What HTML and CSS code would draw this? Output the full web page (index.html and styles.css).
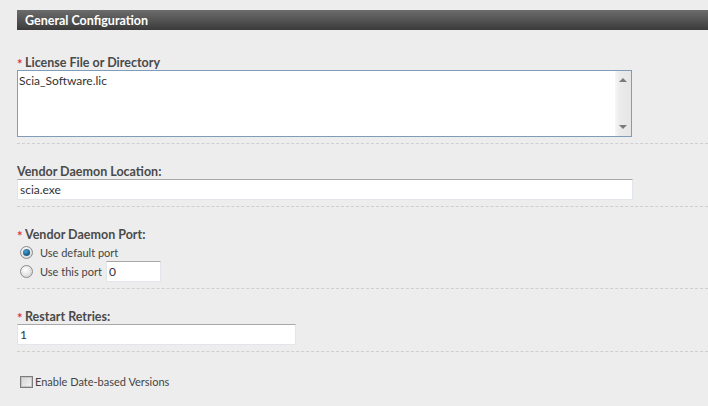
FILE: index.html
```html
<!DOCTYPE html>
<html>
<head>
<meta charset="utf-8">
<link rel="stylesheet" href="styles.css">
</head>
<body>
<div class="page">
  <div class="header">General Configuration</div>

  <div class="field first">
    <div class="label"><span class="req">*</span>License File or Directory</div>
    <div class="textarea">
      <div class="ta-text">Scia_Software.lic</div>
      <div class="scrollbar">
        <span class="arrow up"></span>
        <span class="arrow down"></span>
      </div>
    </div>
  </div>

  <div class="field">
    <div class="label">Vendor Daemon Location:</div>
    <div class="input wide">scia.exe</div>
  </div>

  <div class="field">
    <div class="label"><span class="req">*</span>Vendor Daemon Port:</div>
    <div class="radio-row"><span class="radio checked"></span><span class="opt">Use default port</span></div>
    <div class="radio-row"><span class="radio"></span><span class="opt">Use this port</span><div class="input port">0</div></div>
  </div>

  <div class="field">
    <div class="label"><span class="req">*</span>Restart Retries:</div>
    <div class="input medium">1</div>
  </div>

  <div class="check-row"><span class="checkbox"></span><span class="opt">Enable Date-based Versions</span></div>
</div>
</body>
</html>
```
FILE: styles.css
```css
html, body {
  margin: 0;
  padding: 0;
  background: #ededed;
}
body {
  font-family: Lato, "Open Sans", sans-serif;
  font-size: 12px;
  color: #333;
}
.page {
  padding: 10px 0 0 17px;
}
.header {
  height: 20px;
  line-height: 22px;
  background: linear-gradient(#6c6c6c, #3b3b3b);
  color: #fff;
  font-weight: bold;
  font-size: 12.5px;
  padding-left: 8px;
}
.field {
  border-bottom: 1px dashed #cfcfcf;
  padding: 20px 0 6px 0;
}
.field.first {
  padding-top: 25px;
}
.label {
  font-weight: bold;
  font-size: 12.5px;
  color: #4a4a4a;
  line-height: 15px;
  height: 15px;
  display: flex;
  align-items: center;
}
.req {
  color: #e8353a;
  font-size: 13px;
  width: 8px;
  line-height: 10px;
  margin-top: 3px;
}
.textarea {
  width: 613px;
  height: 65px;
  border: 1px solid #7f9db9;
  background: #fff;
  display: flex;
}
.ta-text {
  flex: 1;
  padding: 2px 1px;
  line-height: 16px;
}
.scrollbar {
  width: 16px;
  background: linear-gradient(90deg, #f7f7f7, #ebebeb 30%, #e6e6e6);
  display: flex;
  flex-direction: column;
  justify-content: space-between;
  align-items: center;
  padding: 7px 0 7px;
  box-sizing: border-box;
}
.arrow {
  width: 0;
  height: 0;
  border-left: 4px solid transparent;
  border-right: 4px solid transparent;
}
.arrow.up { border-bottom: 4px solid #7a7a7a; }
.arrow.down { border-top: 4px solid #7a7a7a; }
.input {
  background: #fff;
  border: 1px solid #e2e6ea;
  border-top-color: #a8a8a8;
  height: 19px;
  line-height: 19px;
  padding-left: 2px;
  box-sizing: content-box;
}
.input.wide { width: 612px; }
.input.medium { width: 275px; }
.radio-row {
  display: flex;
  align-items: center;
  height: 17px;
  margin-top: 2px;
}
.radio-row + .radio-row {
  height: 21px;
  margin-top: 0;
}
.radio {
  width: 11px;
  height: 11px;
  border-radius: 50%;
  border: 1px solid #8b8b8b;
  background: radial-gradient(circle at 40% 35%, #ffffff, #dcdcdc 70%, #c8c8c8);
  margin: 0 7px 0 3px;
  position: relative;
}
.radio.checked::after {
  content: "";
  position: absolute;
  left: 2px;
  top: 2px;
  width: 7px;
  height: 7px;
  border-radius: 50%;
  background: radial-gradient(circle at 40% 35%, #4aa3d6, #1b5f8c 60%, #0d3d5e);
}
.opt {
  color: #444;
  font-size: 11px;
}
.input.port {
  width: 51px;
  height: 19px;
  margin-left: 4px;
}
.check-row {
  display: flex;
  align-items: center;
  margin-top: 23px;
}
.checkbox {
  width: 11px;
  height: 10px;
  border: 1px solid #7d7d7d;
  background: linear-gradient(135deg, #d4d4d4, #f4f4f4);
  box-shadow: inset 0 0 0 1px #c6c6c6;
  margin: 0 2px 0 3px;
}
```
